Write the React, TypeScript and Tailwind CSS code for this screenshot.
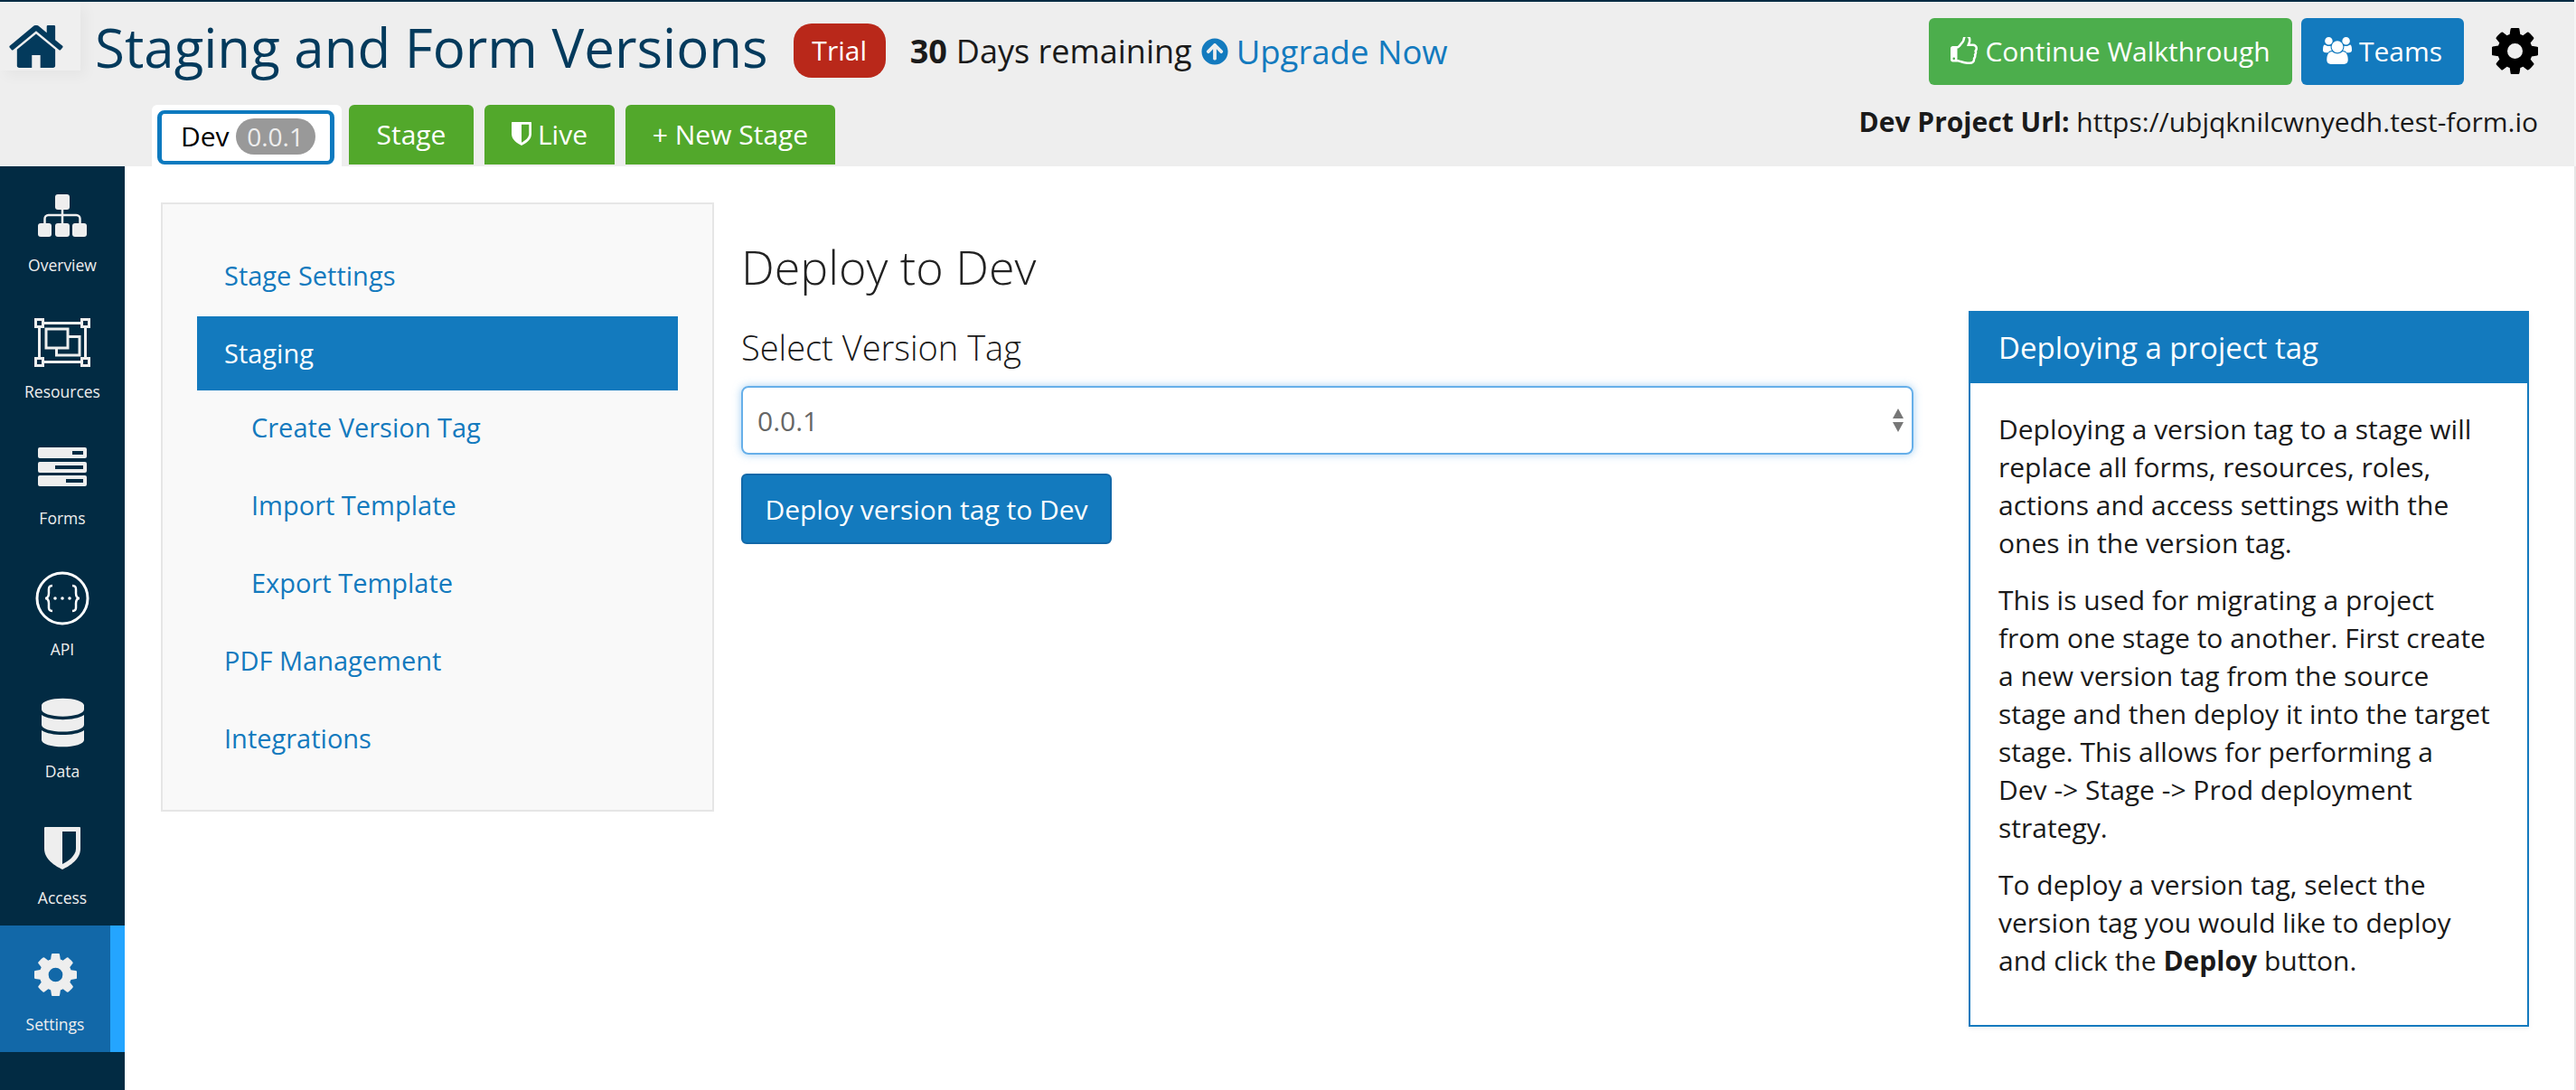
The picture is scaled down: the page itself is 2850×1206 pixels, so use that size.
import type { ReactNode } from 'react';
import { FaArrowCircleUp, FaDatabase } from 'react-icons/fa';

const homePath =
  'M1472 992v480q0 26-19 45t-45 19h-384v-384h-256v384h-384q-26 0-45-19t-19-45v-480q0-1 .5-3t.5-3l575-474 575 474q1 2 1 6zm223-69l-62 74q-8 9-21 11h-3q-13 0-21-7l-692-577-692 577q-12 8-24 7-13-2-21-11l-62-74q-8-10-7-23.5t11-21.5l719-599q32-26 76-26t76 26l244 204v-195q0-14 9-23t23-9h192q14 0 23 9t9 23v408l219 182q10 8 11 21.5t-7 23.5z';
const cogPath =
  'M1152 896q0-106-75-181t-181-75-181 75-75 181 75 181 181 75 181-75 75-181zm512-109v222q0 12-8 23t-20 13l-185 28q-19 54-39 91 35 50 107 138 10 12 10 25t-9 23q-27 37-99 108t-94 71q-12 0-26-9l-138-108q-44 23-91 38-16 136-29 186-7 28-36 28h-222q-14 0-24.5-8.5t-11.5-21.5l-28-184q-49-16-90-37l-141 107q-10 9-25 9-14 0-25-11-126-114-165-168-7-10-7-23 0-12 8-23 15-21 51-66.5t54-70.5q-27-50-41-99l-183-27q-13-2-21-12.5t-8-23.5v-222q0-12 8-23t19-13l186-28q14-46 39-92-40-57-107-138-10-12-10-24 0-10 9-23 26-36 98.5-107.5t94.5-71.5q13 0 26 10l138 107q44-23 91-38 16-136 29-186 7-28 36-28h222q14 0 24.5 8.5t11.5 21.5l28 184q49 16 90 37l142-107q9-9 24-9 13 0 25 10 129 119 165 170 7 8 7 22 0 12-8 23-15 21-51 66.5t-54 70.5q26 50 41 98l183 28q13 2 21 12.5t8 23.5z';
const usersPath =
  'M593 896q-162 5-265 128h-134q-82 0-138-40.5t-56-118.5q0-353 124-353 6 0 43.5 21t97.5 42.5 119 21.5q67 0 133-23-5 37-5 66 0 139 81 256zm1071 637q0 120-73 189.5t-194 69.5h-874q-121 0-194-69.5t-73-189.5q0-53 3.5-103.5t14-109 26.5-108.5 43-97.5 62-81 85.5-53.5 111.5-20q10 0 43 21.5t73 48 107 48 135 21.5 135-21.5 107-48 73-48 43-21.5q61 0 111.5 20t85.5 53.5 62 81 43 97.5 26.5 108.5 14 109 3.5 103.5zm-1024-1277q0 106-75 181t-181 75-181-75-75-181 75-181 181-75 181 75 75 181zm704 384q0 159-112.5 271.5t-271.5 112.5-271.5-112.5-112.5-271.5 112.5-271.5 271.5-112.5 271.5 112.5 112.5 271.5zm576 225q0 78-56 118.5t-138 40.5h-134q-103-123-265-128 81-117 81-256 0-29-5-66 66 23 133 23 59 0 119-21.5t97.5-42.5 43.5-21q124 0 124 353zm-128-609q0 106-75 181t-181 75-181-75-75-181 75-181 181-75 181 75 75 181z';
const thumbPath =
  'M384 1344q0-26-19-45t-45-19-45 19-19 45 19 45 45 19 45-19 19-45zm1152-576q0-51-39-89.5t-89-38.5h-352q0-58 48-159.5t48-160.5q0-98-32-145t-128-47q-26 26-38 85t-30.5 125.5-59.5 109.5q-22 23-77 91-4 5-23 30t-31.5 41-34.5 42.5-40 44-38.5 35.5-40 27-35.5 9h-32v640h32q13 0 31.5 3t33 6.5 38 11 35 11.5 35.5 12.5 29 10.5q211 73 342 73h121q192 0 192-167 0-26-5-56 30-16 47.5-52.5t17.5-73.5-18-69q53-50 53-119 0-25-10-55.5t-25-47.5q32-1 53.5-47t21.5-81zm128-1q0 89-49 163 9 33 9 69 0 77-38 144 3 21 3 43 0 101-60 178 1 139-85 219.5t-227 80.5h-129q-96 0-189.5-22.5t-216.5-65.5q-116-40-138-40h-288q-53 0-90.5-37.5t-37.5-90.5v-640q0-53 37.5-90.5t90.5-37.5h274q36-24 137-155 58-75 107-128 24-25 35.5-85.5t30.5-126.5 62-108q39-37 90-37 84 0 151 32.5t102 101.5 35 186q0 93-48 192h176q104 0 180 76t76 179z';

function Cog({ className }: { className: string }) {
  return (
    <svg viewBox="128 128 1536 1536" className={className} fill="currentColor">
      <path d={cogPath} />
    </svg>
  );
}

function SitemapIcon() {
  return (
    <svg width="54" height="47" viewBox="0 0 54 47" fill="#eeeeee">
      <rect x="19" y="0" width="16" height="17" rx="3" />
      <rect x="0" y="32" width="15" height="15" rx="3" />
      <rect x="19" y="32" width="16" height="15" rx="3" />
      <rect x="38" y="32" width="16" height="15" rx="3" />
      <path d="M27 16v17M7.5 33v-6a4 4 0 0 1 4-4h31a4 4 0 0 1 4 4v6" fill="none" stroke="#eeeeee" strokeWidth="2.5" />
    </svg>
  );
}

function ResourcesIcon() {
  return (
    <svg width="62" height="54" viewBox="0 0 62 54" fill="none" stroke="#eeeeee" strokeWidth="3">
      <rect x="5.5" y="5.5" width="51" height="43" />
      <rect x="1.5" y="1.5" width="8" height="8" fill="#022b43" />
      <rect x="52.5" y="1.5" width="8" height="8" fill="#022b43" />
      <rect x="1.5" y="44.5" width="8" height="8" fill="#022b43" />
      <rect x="52.5" y="44.5" width="8" height="8" fill="#022b43" />
      <rect x="13" y="12" width="24" height="21" />
      <path d="M37 20.5h13v20.5H24.5v-8" />
    </svg>
  );
}

function FormsIcon() {
  return (
    <svg width="54" height="43" viewBox="0 0 54 43" fill="#eeeeee">
      <rect x="0" y="0" width="54" height="12" rx="2" />
      <rect x="0" y="16" width="54" height="12" rx="2" />
      <rect x="0" y="31" width="54" height="12" rx="2" />
      <rect x="38" y="4" width="12" height="4" fill="#022b43" />
      <rect x="19" y="20" width="31" height="4" fill="#022b43" />
      <rect x="31" y="35" width="19" height="4" fill="#022b43" />
    </svg>
  );
}

function ApiIcon() {
  return (
    <svg width="60" height="60" viewBox="0 0 60 60" fill="none" stroke="#ffffff">
      <circle cx="30" cy="30" r="28" strokeWidth="3" />
      <path d="M19 16c-5 0-4 4-4 8s-1 6-4 6c3 0 4 2 4 6s-1 8 4 8M41 16c5 0 4 4 4 8s1 6 4 6c-3 0-4 2-4 6s1 8-4 8" strokeWidth="2.5" />
      <circle cx="22" cy="30" r="1.8" fill="#ffffff" stroke="none" />
      <circle cx="30" cy="30" r="1.8" fill="#ffffff" stroke="none" />
      <circle cx="38" cy="30" r="1.8" fill="#ffffff" stroke="none" />
    </svg>
  );
}

function ShieldIcon({ className, inner }: { className: string; inner: string }) {
  return (
    <svg viewBox="0 0 40 47" className={className}>
      <path d="M1 0H39Q40 0 40 1V24C40 36 28 43 20 47C12 43 0 36 0 24V1Q0 0 1 0Z" fill="currentColor" />
      <path d="M20 5H35V24C35 32 26 38 20 41Z" fill={inner} />
    </svg>
  );
}

const navItems = [
  { label: 'Overview', icon: <SitemapIcon /> },
  { label: 'Resources', icon: <div className="mt-[2px]"><ResourcesIcon /></div> },
  { label: 'Forms', icon: <div className="mb-[4px]"><FormsIcon /></div> },
  { label: 'API', icon: <div className="mt-[8px]"><ApiIcon /></div>, labelClass: 'mt-[17px]' },
  { label: 'Data', icon: <div className="mt-[2px]"><FaDatabase className="w-[47px] h-[55px] text-[#eeeeee]" /></div> },
  { label: 'Access', icon: <ShieldIcon className="w-[40px] h-[47px] text-[#eeeeee]" inner="#022b43" /> },
  { label: 'Settings', icon: <Cog className="w-[47px] h-[47px] text-[#eeeeee]" />, active: true },
];

const stageMenu = [
  { label: 'Stage Settings', className: 'pl-[30px]' },
  { label: 'Staging', className: 'pl-[30px] bg-[#137abe] text-white' },
  { label: 'Create Version Tag', className: 'pl-[60px] mt-[-4px]' },
  { label: 'Import Template', className: 'pl-[60px]' },
  { label: 'Export Template', className: 'pl-[60px]' },
  { label: 'PDF Management', className: 'pl-[30px]' },
  { label: 'Integrations', className: 'pl-[30px]' },
];

function Tab({ className, children }: { className: string; children: ReactNode }) {
  return (
    <div className={`${className} h-[66px] pb-[2px] rounded-t-[6px] bg-[#52a82b] text-white text-[30px] flex items-center justify-center`}>
      {children}
    </div>
  );
}

export default function App() {
  return (
    <div className="w-[2850px] h-[1206px] overflow-hidden bg-white flex font-['Open_Sans',sans-serif] text-[#1a1a1a]">
      <div className="w-[2848px] shrink-0 flex flex-col">
        {/* Header */}
        <header className="h-[184px] shrink-0 bg-[#eeeeee] border-t-2 border-[#022b43] flex flex-col">
          <div className="h-[114px] flex pr-[40px]">
            <div className="w-[89px] h-[76px] shrink-0 bg-[#efefef] shadow-[6px_6px_14px_rgba(0,0,0,0.04)] pl-[10px] pt-[26px]">
              <svg viewBox="97 256 1600 1280" className="w-[60px] h-[47px] text-[#033a5c]" fill="currentColor">
                <path d={homePath} />
              </svg>
            </div>
            <h1 className="ml-[16px] mt-[5px] h-[90px] text-[60px] leading-[90px] text-[#033a5c] whitespace-nowrap">
              Staging and Form Versions
            </h1>
            <span className="ml-[28px] mt-[24px] w-[102px] h-[60px] rounded-[20px] bg-[#b9281a] text-white text-[30px] leading-[60px] text-center">
              Trial
            </span>
            <div className="ml-[27px] mt-[25px] h-[60px] flex items-center text-[36px] whitespace-nowrap">
              <b className="font-bold">30</b>
              <span className="ml-[10px]">Days remaining</span>
              <FaArrowCircleUp className="ml-[10px] w-[30px] h-[30px] text-[#137abe]" />
              <span className="ml-[9px] text-[36.5px] text-[#137abe]">Upgrade Now</span>
            </div>
            <button className="ml-auto mt-[18px] w-[402px] h-[74px] pb-[2px] rounded-[6px] bg-[#4cae4c] text-white text-[30px] flex items-center justify-center gap-[8px]">
              <svg viewBox="128 128 1536 1536" className="w-[30px] h-[30px]" fill="currentColor">
                <path d={thumbPath} />
              </svg>
              Continue Walkthrough
            </button>
            <button className="ml-[10px] mt-[18px] w-[180px] h-[74px] pb-[2px] rounded-[6px] bg-[#137abe] text-white text-[30px] flex items-center justify-center gap-[8px]">
              <svg viewBox="0 0 1920 1792" className="w-[32px] h-[30px]" fill="currentColor">
                <path d={usersPath} />
              </svg>
              Teams
            </button>
            <Cog className="ml-[31px] mt-[29px] w-[51px] h-[51px] text-black" />
          </div>
          <div className="flex-1 flex pl-[168px] pr-[40px]">
            <div className="w-[210px] rounded-t-[6px] bg-white pt-[6px] px-[6px]">
              <div className="w-[196px] h-[60px] pb-[3px] rounded-[8px] border-y-4 border-x-[5px] border-[#0d7abf] flex items-center pl-[21px] text-black text-[30px]">
                Dev
                <span className="ml-[7px] w-[88px] h-[40px] rounded-full bg-[#999999] text-[#eeeeee] text-[28px] leading-[40px] text-center">
                  0.0.1
                </span>
              </div>
            </div>
            <Tab className="ml-[8px] w-[138px]">Stage</Tab>
            <Tab className="ml-[12px] w-[144px]">
              <ShieldIcon className="w-[22px] h-[26px] mr-[7px] text-white" inner="#52a82b" />
              Live
            </Tab>
            <Tab className="ml-[12px] w-[232px]">+ New Stage</Tab>
            <div className="ml-auto mt-[-1px] text-[30px] leading-[40px] whitespace-nowrap">
              <b className="font-bold">Dev Project Url:</b> https://ubjqknilcwnyedh.test-form.io
            </div>
          </div>
        </header>

        <div className="flex-1 flex min-h-0">
          {/* Sidebar */}
          <aside className="w-[138px] shrink-0 bg-[#022b43] flex flex-col">
            {navItems.map(({ label, icon, labelClass, active }) => (
              <div
                key={label}
                className={
                  active
                    ? 'h-[140px] shrink-0 flex flex-col items-center bg-[#1268a8] border-r-[16px] border-[#24a5ff]'
                    : 'h-[140px] shrink-0 flex flex-col items-center'
                }
              >
                <div className="mt-[24px] h-[60px] flex items-center justify-center">{icon}</div>
                <span className={`${labelClass ?? 'mt-[12px]'} text-[17.5px] leading-[26px] font-medium text-[#eeeeee]`}>{label}</span>
              </div>
            ))}
          </aside>

          {/* Stage menu */}
          <div className="ml-[40px] mt-[40px] w-[612px] h-[674px] shrink-0 border-2 border-[#e6e6e6] bg-[#f9f9f9] pt-[38px] px-[38px] flex flex-col gap-[4px]">
            {stageMenu.map(({ label, className }) => (
              <div key={label} className={`h-[82px] shrink-0 flex items-center text-[29px] text-[#137abe] ${className}`}>
                {label}
              </div>
            ))}
          </div>

          {/* Deploy form */}
          <main className="ml-[30px] mt-[40px] w-[1297px] shrink-0">
            <h2 className="mt-[35px] text-[52px] leading-[72px] font-light text-[#222222]">Deploy to Dev</h2>
            <div className="mt-[27px] text-[38px] leading-[52px] font-light">Select Version Tag</div>
            <div className="mt-[17px] h-[76px] rounded-[8px] border-[2px] border-[#66afe9] shadow-[0_0_10px_rgba(102,175,233,0.6)] flex items-center justify-between pl-[16px] pr-[8px] text-[30px] text-[#666666]">
              0.0.1
              <svg width="14" height="26" viewBox="0 0 14 26" fill="#777777">
                <path d="M7 0l6 11H1zM7 26L1 15h12z" />
              </svg>
            </div>
            <button className="mt-[21px] w-[410px] h-[78px] rounded-[6px] border-[2px] border-[#1268a8] bg-[#137abe] text-white text-[30px] font-medium">
              Deploy version tag to Dev
            </button>
          </main>

          {/* Help panel */}
          <section className="ml-[61px] mt-[160px] w-[620px] h-[792px] shrink-0 border-2 border-[#137abe] shadow-[0_2px_6px_rgba(0,0,0,0.06)] flex flex-col">
            <div className="h-[78px] shrink-0 bg-[#137abe] text-white text-[33px] flex items-center pl-[31px]">
              Deploying a project tag
            </div>
            <div className="pt-[30px] px-[31px] text-[30px] leading-[42px] text-[#1a1a1a] flex flex-col gap-[21px]">
              <p>Deploying a version tag to a stage will replace all forms, resources, roles, actions and access settings with the ones in the version tag.</p>
              <p>
                This is used for migrating a project from one stage to another. First create a new version tag from the source stage and then deploy it into the target stage. This allows for performing a
                <br />
                Dev -&gt; Stage -&gt; Prod deployment strategy.
              </p>
              <p>To deploy a version tag, select the version tag you would like to deploy and click the <b className="font-bold">Deploy</b> button.</p>
            </div>
          </section>
        </div>
      </div>

      {/* Thin strip along the right edge */}
      <div className="w-[2px] shrink-0 flex flex-col">
        <div className="h-[184px] bg-[#f5f5f5]" />
        <div className="flex-1 bg-[#e6e6e6]" />
      </div>
    </div>
  );
}
